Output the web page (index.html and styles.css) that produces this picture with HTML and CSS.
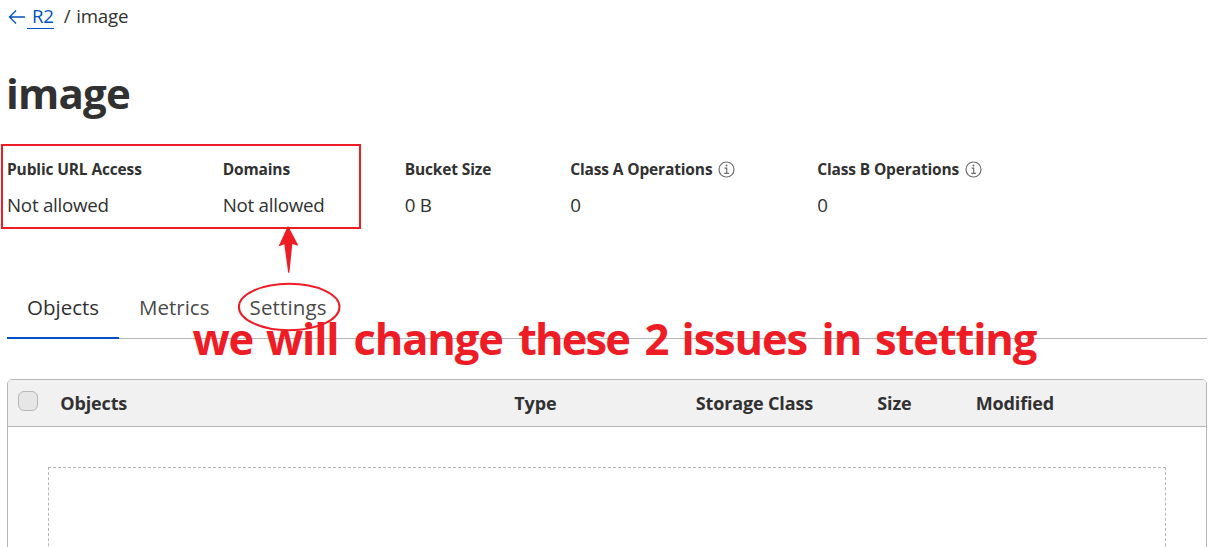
FILE: index.html
```html
<!DOCTYPE html>
<html lang="en">
<head>
<meta charset="utf-8">
<title>R2 / image</title>
<link rel="stylesheet" href="styles.css">
</head>
<body>
<main class="page">
  <nav class="breadcrumb">
    <svg class="back" width="18" height="16" viewBox="0 0 18 16"><path d="M17 8H2M8 1.5L1.5 8L8 14.5"/></svg>
    <a class="crumb-link" href="#">R2</a>
    <span class="crumb-sep">/</span>
    <span class="crumb-here">image</span>
  </nav>
  <h1 class="title">image</h1>
  <section class="stats">
    <div class="stat"><div class="label">Public URL Access</div><div class="value">Not allowed</div></div>
    <div class="stat"><div class="label">Domains</div><div class="value">Not allowed</div></div>
    <div class="stat"><div class="label">Bucket Size</div><div class="value">0 B</div></div>
    <div class="stat"><div class="label"><span>Class A Operations</span><svg class="info" width="17" height="17" viewBox="0 0 17 17"><circle cx="8.5" cy="8.5" r="7.5"/><path d="M6.5 7.2H8.7V12.2M6.2 12.3H11"/><circle class="dot" cx="8.5" cy="4.5" r="1"/></svg></div><div class="value">0</div></div>
    <div class="stat"><div class="label"><span>Class B Operations</span><svg class="info" width="17" height="17" viewBox="0 0 17 17"><circle cx="8.5" cy="8.5" r="7.5"/><path d="M6.5 7.2H8.7V12.2M6.2 12.3H11"/><circle class="dot" cx="8.5" cy="4.5" r="1"/></svg></div><div class="value">0</div></div>
  </section>
  <nav class="tabs">
    <a class="tab tab-objects">Objects</a>
    <a class="tab tab-metrics">Metrics</a>
    <a class="tab tab-settings">Settings</a>
  </nav>
  <section class="table">
    <div class="thead">
      <span class="check"></span>
      <span class="th">Objects</span>
      <span class="th">Type</span>
      <span class="th">Storage Class</span>
      <span class="th">Size</span>
      <span class="th">Modified</span>
    </div>
    <div class="dropzone"></div>
  </section>
  <svg class="notes" width="1214" height="547" viewBox="0 0 1214 547">
    <rect class="line" x="2" y="145" width="358" height="83"/>
    <ellipse class="line" cx="289.2" cy="307" rx="50.3" ry="23.2"/>
    <path class="arrow" d="M288 225.7L298.5 245.8L292.3 244L289.4 272.8H288.2L284.3 244.2L278.5 246.6Z"/>
    <text class="note" y="355"><tspan x="192.5">we </tspan><tspan x="266">will </tspan><tspan x="353.5">change </tspan><tspan class="tight" x="518">these </tspan><tspan x="644.5">2 </tspan><tspan x="681.5">issues </tspan><tspan x="821.5">in </tspan><tspan x="875">stetting</tspan></text>
  </svg>
</main>
</body>
</html>
```
FILE: styles.css
```css
* { box-sizing: border-box; }
body {
  margin: 0;
  background: #fff;
  color: #313131;
  font-family: "Open Sans", "Noto Sans", sans-serif;
}
.page {
  position: relative;
  width: 1214px;
  height: 547px;
  overflow: hidden;
  padding: 0 7px;
}
.breadcrumb {
  display: flex;
  height: 32px;
  font-size: 18.7px;
  line-height: 32px;
  letter-spacing: -0.25px;
}
.back { margin: 9px 2px 0 1px; fill: none; stroke: #0051c3; stroke-width: 1.3; }
.crumb-link {
  height: 29px;
  margin-left: -1px;
  padding-left: 5px;
  color: #0051c3;
  text-decoration: none;
  border-bottom: 1px solid #0051c3;
}
.crumb-sep { margin-left: 10px; }
.crumb-here { margin-left: 6px; }
.title {
  margin: 37px 0 0 -1px;
  font-size: 42px;
  line-height: 48px;
  font-weight: 700;
  letter-spacing: -0.8px;
}
.stats {
  display: grid;
  grid-template-columns: 215.7px 182px 165.5px 247px 1fr;
  margin-top: 40px;
  height: 62px;
}
.label {
  display: flex;
  align-items: center;
  height: 24px;
  font-size: 15.5px;
  line-height: 24px;
  font-weight: 700;
  letter-spacing: -0.14px;
  white-space: nowrap;
}
.info { margin: 1px 0 0 6px; fill: none; stroke: #6e6e6e; stroke-width: 1.2; }
.dot { fill: #6e6e6e; stroke: none; }
.value {
  margin-top: 10px;
  font-size: 18.8px;
  line-height: 28px;
  letter-spacing: -0.28px;
}
.tabs {
  display: flex;
  height: 48px;
  margin-top: 72px;
  font-size: 20.5px;
  line-height: 32px;
  box-shadow: inset 0 -1px #b6b6b6;
  color: #4a4a4a;
}
.tab-objects { width: 112px; padding-left: 20px; border-bottom: 2px solid #0051c3; color: #313131; }
.tab-metrics { width: 110.5px; padding-left: 20px; }
.tab-settings { padding-left: 20px; letter-spacing: 0.15px; }
.table {
  height: 180px;
  margin-top: 40px;
  border: 1px solid #b6b6b6;
  border-radius: 5px 5px 0 0;
}
.thead {
  display: grid;
  grid-template-columns: 52.3px 454px 181.5px 181.5px 98.5px 1fr;
  height: 47px;
  border-bottom: 1px solid #b6b6b6;
  border-radius: 4px 4px 0 0;
  background: #f1f1f1;
  font-size: 18px;
  line-height: 46px;
  font-weight: 700;
  letter-spacing: -0.15px;
}
.check {
  width: 20px;
  height: 20px;
  margin: 11px 0 0 10px;
  border: 1px solid #b6b6b6;
  border-radius: 6px;
  background: #e6e6e6;
}
.dropzone {
  height: 120px;
  margin: 40px 40px 0;
  border: 1px dashed #b6b6b6;
}
.notes { position: absolute; left: 0; top: 0; }
.line { fill: none; stroke: #ee1c25; stroke-width: 2; }
.arrow { fill: #ee1c25; }
.note { fill: #ee1c25; font-size: 43.5px; font-weight: 700; letter-spacing: -1.15px; }
.tight { letter-spacing: -1.9px; }
```
